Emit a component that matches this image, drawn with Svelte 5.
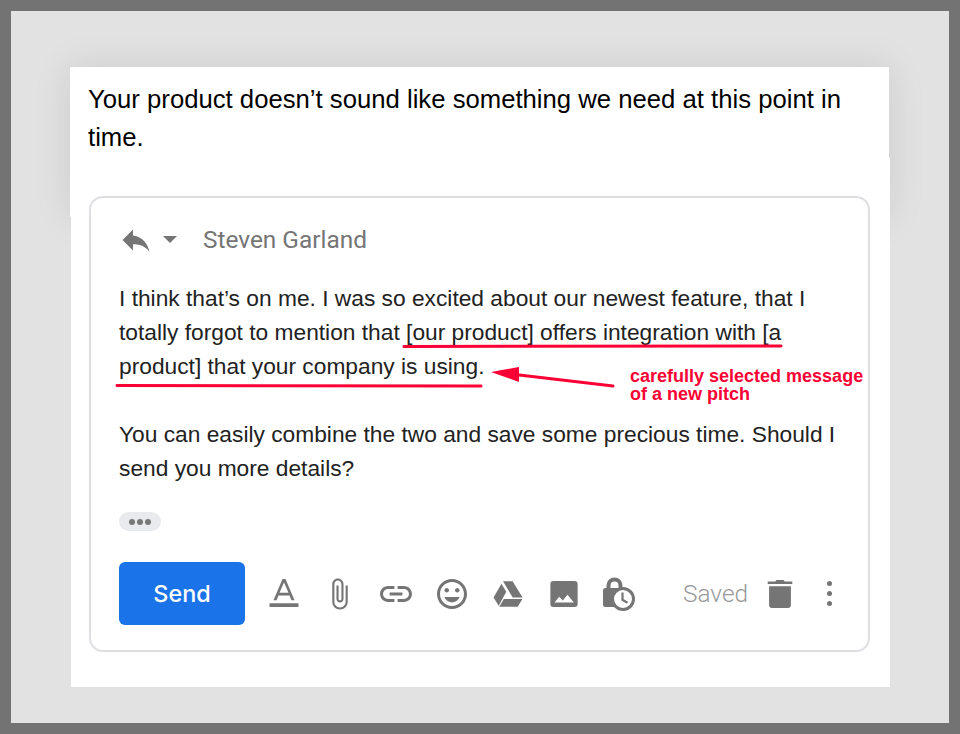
<script>
  const tools = [
    { name: 'format', box: '0 0 24 24', d: 'M10.800 0 3.600 17h2.500l1.500-3.800h8.800l1.500 3.800h2.500L13.200 0h-2.400zM8.400 11 12 2.800 15.600 11H8.400zM.4 19.300h23.200v3.100H.4z' },
    { name: 'attach', box: '1.850 1.350 21.300 21.300', d: 'M16.500 6v11.500c0 2.210-1.790 4-4 4s-4-1.790-4-4V5c0-1.380 1.120-2.500 2.500-2.500s2.500 1.120 2.500 2.500v10.500c0 .55-.45 1-1 1s-1-.45-1-1V6H10v9.500c0 1.380 1.120 2.500 2.500 2.500s2.500-1.120 2.500-2.500V5c0-2.210-1.790-4-4-4S7 2.790 7 5v12.500c0 3.040 2.460 5.500 5.500 5.500s5.500-2.460 5.500-5.500V6h-1.500z' },
    { name: 'link', box: '2.600 2.600 18.800 18.800', d: 'M3.900 12c0-1.710 1.390-3.100 3.100-3.100h4V7H7c-2.760 0-5 2.240-5 5s2.240 5 5 5h4v-1.900H7c-1.710 0-3.100-1.390-3.100-3.100zM8 13h8v-2H8v2zm9-6h-4v1.900h4c1.710 0 3.100 1.390 3.100 3.100s-1.390 3.100-3.100 3.100h-4V17h4c2.760 0 5-2.240 5-5s-2.240-5-5-5z' },
    { name: 'mood', box: '2 2 20 20', d: 'M11.990 2C6.470 2 2 6.480 2 12s4.470 10 9.990 10C17.520 22 22 17.520 22 12S17.520 2 11.990 2zM12 20c-4.420 0-8-3.580-8-8s3.580-8 8-8 8 3.580 8 8-3.580 8-8 8zm3.500-9c.83 0 1.500-.67 1.500-1.500S16.330 8 15.500 8 14 8.670 14 9.500s.67 1.500 1.500 1.500zm-7 0c.83 0 1.500-.67 1.500-1.500S9.330 8 8.500 8 7 8.670 7 9.500 7.670 11 8.500 11zm3.500 6.500c2.330 0 4.310-1.460 5.110-3.500H6.890c.8 2.040 2.780 3.500 5.110 3.500z' },
    { name: 'drive', box: '1.500 1.400 21 21', d: 'M8.500 3h6.700l7 11.400h-6.900zM7.400 4.700l3.400 5.700L5.500 20.200 1.900 14.300zM9.100 15.400h13l-3.300 5.400H5.900z' },
    { name: 'photo', box: '1 1 22 22', d: 'M22 19.500v-15c0-1.100-.9-2-2-2H4c-1.100 0-2 .9-2 2v15c0 1.100.9 2 2 2h16c1.100 0 2-.9 2-2zM8.500 14l2.600 2.800 3.500-4.300 4.600 5.800H5z' }
  ];
  const trash = 'M4 20.500c0 1.100.9 2 2 2h12c1.100 0 2-.9 2-2V6.500H4v14zM21 3h-5.500l-1-1h-5l-1 1H3v2h18V3z';
</script>

<div class="frame">
  <div class="quote">
    <p>Your product doesn’t sound like something we need at this point in time.</p>
  </div>

  <div class="sheet">
    <div class="compose">
      <div class="recipient">
        <svg class="reply" viewBox="0 0 24 24"><path d="M10 9V5l-7 7 7 7v-4.100c5 0 8.500 1.600 11 5.100-1-5-4-10-11-11z" /></svg>
        <span class="caret"></span>
        <span class="name">Steven Garland</span>
      </div>

      <div class="message">
        <p>I think that’s on me. I was so excited about our newest feature, that I totally forgot to mention that [our product] offers integration with [a product] that your company is using.</p>
        <p>You can easily combine the two and save some precious time. Should I send you more details?</p>
      </div>

      <div class="more"><i></i><i></i><i></i></div>

      <div class="toolbar">
        <button class="send">Send</button>
        <div class="tools">
          {#each tools as tool}
            <svg class="tool" viewBox={tool.box}><path d={tool.d} /></svg>
          {/each}
          <svg class="tool" viewBox="0 0 30 30">
            <rect x="-2" y="9" width="20" height="19" rx="2.500" />
            <path class="shackle" d="M3.500 10V6.500a6 6 0 0 1 12 0V10" />
            <circle cx="18" cy="20" r="10.500" class="ring" />
            <path class="hands" d="M17.500 13.500v7.300l5 3" />
          </svg>
        </div>
        <span class="saved">Saved</span>
        <svg class="tool trash" viewBox="1 1.250 22 22"><path d={trash} /></svg>
        <div class="dots"><i></i><i></i><i></i></div>
      </div>

      <svg class="marks" viewBox="0 0 780 456">
        <path d="M314 150.500 L691 150" class="line" />
        <path d="M27 189.500 L391 190" class="line" />
        <path d="M523 190 L425 178.500" class="line" />
        <path d="M401 176 L429 171 L429 186 Z" class="head" />
      </svg>
      <div class="note">carefully selected message<br />of a new pitch</div>
    </div>
  </div>
</div>

<style>
  :global(body) {
    margin: 0;
    background: #737373;
  }

  .frame {
    box-sizing: border-box;
    width: 938px;
    height: 712px;
    margin: 11px;
    padding: 56px 59px 0;
    background: #e2e2e2;
    overflow: hidden;
  }

  .quote {
    box-sizing: border-box;
    width: 819px;
    height: 150px;
    padding: 13px 18px 0;
    background: #fff;
    box-shadow: 0 0 36px rgba(0, 0, 0, 0.1);
  }

  .quote p {
    margin: 0;
    font: 25.7px/38px "Liberation Sans", Arial, sans-serif;
    color: #000;
  }

  .sheet {
    position: relative;
    box-sizing: border-box;
    width: 819px;
    height: 529px;
    margin: -59px 0 0 1px;
    padding: 38px 20px 0 18px;
    background: #fff;
  }

  .compose {
    position: relative;
    box-sizing: border-box;
    width: 781px;
    height: 456px;
    padding: 0 28px;
    border: 2px solid #dedfe2;
    border-radius: 14px;
  }

  .recipient {
    display: flex;
    align-items: center;
    height: 83px;
  }

  .reply {
    width: 36px;
    height: 36px;
    margin-left: -1px;
    fill: #757575;
  }

  .caret {
    width: 0;
    height: 0;
    margin-left: 9px;
    border: 7px solid transparent;
    border-top: 7px solid #757575;
    border-bottom: 0;
  }

  .name {
    margin-left: 26px;
    font: 24.4px/30px Roboto, sans-serif;
    color: #757575;
  }

  .message {
    font: 22.75px/34px "Liberation Sans", Arial, sans-serif;
    color: #222;
  }

  .message p {
    margin: 0 0 34px;
  }

  .more {
    display: flex;
    align-items: center;
    justify-content: center;
    gap: 2px;
    width: 42px;
    height: 19px;
    margin-top: -7px;
    background: #e8eaed;
    border-radius: 10px;
  }

  .more i {
    width: 6px;
    height: 6px;
    background: #777;
    border-radius: 50%;
  }

  .toolbar {
    display: flex;
    align-items: center;
    margin-top: 31px;
  }

  .send {
    width: 126px;
    height: 63px;
    padding: 0;
    border: 0;
    border-radius: 6px;
    background: #1a73e8;
    color: #fff;
    font: 500 23.4px Inter, sans-serif;
  }

  .tools {
    display: flex;
    gap: 26px;
    margin-left: 24px;
  }

  .tool {
    flex: none;
    width: 30px;
    height: 30px;
    fill: #757575;
    overflow: visible;
  }

  .shackle {
    fill: none;
    stroke: #757575;
    stroke-width: 4;
  }

  .ring {
    fill: #fff;
    stroke: #757575;
    stroke-width: 3;
  }

  .hands {
    fill: none;
    stroke: #757575;
    stroke-width: 2.200;
  }

  .saved {
    margin-left: 48px;
    font: 24.4px/30px Roboto, sans-serif;
    font-weight: 300;
    color: #999;
  }

  .trash {
    margin-left: 17px;
  }

  .dots {
    display: flex;
    flex-direction: column;
    gap: 5px;
    margin-left: 32px;
  }

  .dots i {
    width: 5px;
    height: 5px;
    background: #757575;
    border-radius: 50%;
  }

  .marks {
    position: absolute;
    left: -1px;
    top: -2px;
    width: 780px;
    height: 456px;
    pointer-events: none;
  }

  .line {
    fill: none;
    stroke: #fb0034;
    stroke-width: 3;
    stroke-linecap: round;
  }

  .head {
    fill: #fb0034;
  }

  .note {
    position: absolute;
    left: 539px;
    top: 169px;
    font: bold 18px/18px "Liberation Sans", Arial, sans-serif;
    color: #fb0034;
    white-space: nowrap;
  }
</style>
